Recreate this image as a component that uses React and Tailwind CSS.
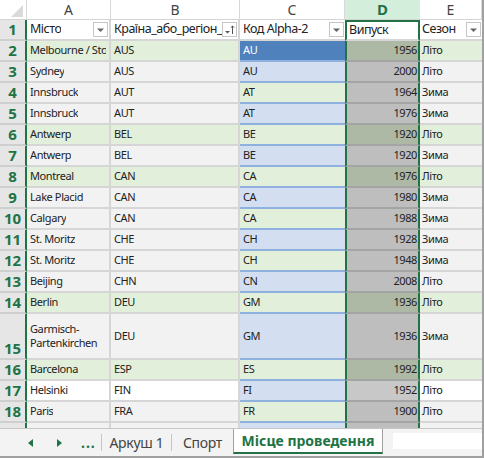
import React from 'react';

const FONT = { fontFamily: '"Segoe UI", "Noto Sans", sans-serif' };

// n, city, noc, alpha2, year, season, band, tall
const ROWS = [
  [2, 'Melbourne / Stockholm', 'AUS', 'AU', '1956', 'Літо', 'g'],
  [3, 'Sydney', 'AUS', 'AU', '2000', 'Літо', 's'],
  [4, 'Innsbruck', 'AUT', 'AT', '1964', 'Зима', 's'],
  [5, 'Innsbruck', 'AUT', 'AT', '1976', 'Зима', 's'],
  [6, 'Antwerp', 'BEL', 'BE', '1920', 'Літо', 'g'],
  [7, 'Antwerp', 'BEL', 'BE', '1920', 'Зима', 's'],
  [8, 'Montreal', 'CAN', 'CA', '1976', 'Літо', 'g'],
  [9, 'Lake Placid', 'CAN', 'CA', '1980', 'Зима', 's'],
  [10, 'Calgary', 'CAN', 'CA', '1988', 'Зима', 's'],
  [11, 'St. Moritz', 'CHE', 'CH', '1928', 'Зима', 's'],
  [12, 'St. Moritz', 'CHE', 'CH', '1948', 'Зима', 's'],
  [13, 'Beijing', 'CHN', 'CN', '2008', 'Літо', 's'],
  [14, 'Berlin', 'DEU', 'GM', '1936', 'Літо', 'g'],
  [15, 'Garmisch-Partenkirchen', 'DEU', 'GM', '1936', 'Зима', 's', true],
  [16, 'Barcelona', 'ESP', 'ES', '1992', 'Літо', 'g'],
  [17, 'Helsinki', 'FIN', 'FI', '1952', 'Літо', 'w'],
  [18, 'Paris', 'FRA', 'FR', '1900', 'Літо', 's'],
];

const bandBg = { g: 'bg-[#e2efda]', s: 'bg-[#f2f2f2]', w: 'bg-white' };
const selBg = { g: 'bg-[#adb9a5]', s: 'bg-[#bebebe]', w: 'bg-[#c8c8c8]' };

function FilterButton({ sorted }) {
  return (
    <span className="flex h-[15px] w-[15px] shrink-0 items-center justify-center border border-[#c6c6c6] bg-white">
      {sorted ? (
        <svg width="11" height="11" viewBox="0 0 11 11">
          <path d="M1 7h5l-2.5 2.5z" fill="#555" />
          <path d="M8.5 10V2M6.8 3.7L8.5 2l1.7 1.7" stroke="#555" strokeWidth="1" fill="none" />
        </svg>
      ) : (
        <svg width="9" height="6" viewBox="0 0 9 6">
          <path d="M1 1.5h7L4.5 5z" fill="#666" />
        </svg>
      )}
    </span>
  );
}

function ColumnHeaders() {
  const col = 'flex items-center justify-center border-r border-[#d9d9d9] text-[14px] text-[#444]';
  return (
    <div className="flex h-[20px] border-b border-[#d4d4d4] bg-white">
      <div className="relative w-[27px] border-r border-[#d9d9d9]">
        <svg className="absolute bottom-[2px] right-[3px]" width="12" height="12" viewBox="0 0 12 12">
          <path d="M12 0v12H0z" fill="#dadada" />
        </svg>
      </div>
      <div className={`w-[84px] ${col}`}>A</div>
      <div className={`w-[129px] ${col}`}>B</div>
      <div className={`w-[105px] ${col}`}>C</div>
      <div className="flex w-[75px] items-center justify-center bg-[#d3eedb] text-[15px] font-bold text-[#217346]">D</div>
      <div className={`w-[62px] ${col}`}>E</div>
    </div>
  );
}

function TitleRow() {
  const txt = 'text-[12.5px] tracking-[-0.5px] text-[#222]';
  const cell = `flex items-center justify-between border-r-2 border-b-2 border-[#d6d6d6] bg-white pl-[3px] pr-[1px] ${txt}`;
  return (
    <div className="flex h-[21px]">
      <div className="flex w-[27px] items-center justify-center border-r-2 border-b-2 border-r-[#217346] border-b-[#cfcfcf] bg-[#e6e6e6] text-[15px] font-bold text-[#217346]">1</div>
      <div className={`w-[84px] ${cell}`}>
        <span className="truncate">Місто</span>
        <FilterButton />
      </div>
      <div className={`w-[129px] ${cell}`}>
        <span className="overflow-hidden whitespace-nowrap">Країна_або_регіон_Н</span>
        <FilterButton sorted />
      </div>
      <div className={`flex w-[105px] items-center justify-between border-b-2 border-[#d6d6d6] bg-white pl-[3px] pr-[1px] ${txt}`}>
        <span className="truncate">Код Alpha-2</span>
        <FilterButton />
      </div>
      <div className={`flex w-[75px] items-center border-2 border-[#217346] border-b-[#d6d6d6] bg-white pl-[2px] ${txt}`}>Випуск</div>
      <div className={`flex w-[62px] items-center justify-between border-b-2 border-[#d6d6d6] bg-white pl-[2px] pr-[1px] ${txt}`}>
        <span className="truncate">Сезон</span>
        <FilterButton />
      </div>
    </div>
  );
}

function DataRow({ row }) {
  const [n, city, noc, code, year, season, band, tall] = row;
  const h = tall ? 'h-[46px]' : 'h-[21px]';
  const codeBg = n === 2 ? 'bg-[#4f81bd] text-white' : n % 2 === 0 ? 'bg-[#e2efda] text-[#222]' : 'bg-[#d3dff0] text-[#222]';
  const text = 'text-[11px] tracking-[-0.4px] text-[#222]';
  return (
    <div className={`flex ${h}`}>
      <div className={`flex w-[27px] justify-center border-r-2 border-b-2 border-r-[#217346] border-b-[#cfcfcf] bg-[#e6e6e6] text-[15px] font-bold leading-[19px] text-[#217346] ${tall ? 'items-end' : 'items-center'}`}>
        {n}
      </div>
      <div className={`flex w-[84px] items-center border-r-2 border-b-2 border-[#d6d6d6] px-[3px] ${bandBg[band]} ${text}`}>
        <span className={tall ? 'leading-[14px]' : 'overflow-hidden whitespace-nowrap'}>{city}</span>
      </div>
      <div className={`flex w-[129px] items-center border-r-2 border-b-2 border-[#d6d6d6] px-[3px] ${bandBg[band]} ${text}`}>
        {noc}
      </div>
      <div className={`flex w-[105px] items-center border-b-2 border-[#8fb1de] px-[3px] text-[11px] tracking-[-0.4px] ${codeBg}`}>
        {code}
      </div>
      <div className={`flex w-[75px] items-center justify-end border-x-2 border-b-2 border-x-[#217346] border-b-[#a4a4a4] pr-[1px] ${selBg[band]} ${text}`}>
        {year}
      </div>
      <div className={`flex w-[62px] items-center border-b-2 border-[#d6d6d6] px-[2px] ${bandBg[band]} ${text}`}>
        {season}
      </div>
    </div>
  );
}

// the next row peeks out a few pixels above the sheet tabs
function PartialRow() {
  return (
    <div className="flex h-[5px]">
      <div className="w-[27px] border-r-2 border-r-[#217346] bg-[#e6e6e6]" />
      <div className="w-[84px] border-r-2 border-[#d6d6d6] bg-[#f2f2f2]" />
      <div className="w-[129px] border-r-2 border-[#d6d6d6] bg-[#f2f2f2]" />
      <div className="w-[105px] bg-[#d3dff0]" />
      <div className="w-[75px] border-x-2 border-x-[#217346] bg-[#bebebe]" />
      <div className="w-[62px] bg-[#f2f2f2]" />
    </div>
  );
}

function SheetTabs() {
  return (
    <div className="flex h-[30px] border-t border-b-2 border-t-[#c6c6c6] border-b-[#a0a0a0] bg-[#f3f3f3] text-[14px] text-[#444]">
      <div className="flex w-[101px] items-center pl-[28px]">
        <svg width="5" height="8" viewBox="0 0 5 8">
          <path d="M5 0v8L0 4z" fill="#217346" />
        </svg>
        <svg className="ml-[24px]" width="5" height="8" viewBox="0 0 5 8">
          <path d="M0 0v8l5-4z" fill="#217346" />
        </svg>
        <span className="ml-[19px] font-bold tracking-[1px] text-[#217346]">...</span>
      </div>
      <div className="my-[5px] w-px bg-[#c6c6c6]" />
      <div className="flex w-[69px] items-center justify-center tracking-[-0.3px]">Аркуш 1</div>
      <div className="my-[5px] w-px bg-[#c6c6c6]" />
      <div className="flex w-[61px] items-center justify-center tracking-[-0.3px]">Спорт</div>
      <div className="flex h-[25px] w-[150px] items-center justify-center border-x border-b-2 border-x-[#a0a0a0] border-b-[#217346] bg-white text-[14px] font-bold text-[#217346]">
        Місце проведення
      </div>
      <div className="flex flex-1 pl-[10px] pt-[4px]">
        <div className="h-[16px] flex-1 bg-white" />
      </div>
    </div>
  );
}

export default function App() {
  return (
    <div className="h-[458px] w-[484px] overflow-hidden border-r-2 border-[#a0a0a0] bg-white" style={FONT}>
      <div className="h-[428px] overflow-hidden">
        <ColumnHeaders />
        <TitleRow />
        {ROWS.map((r) => (
          <DataRow key={r[0]} row={r} />
        ))}
        <PartialRow />
      </div>
      <SheetTabs />
    </div>
  );
}
